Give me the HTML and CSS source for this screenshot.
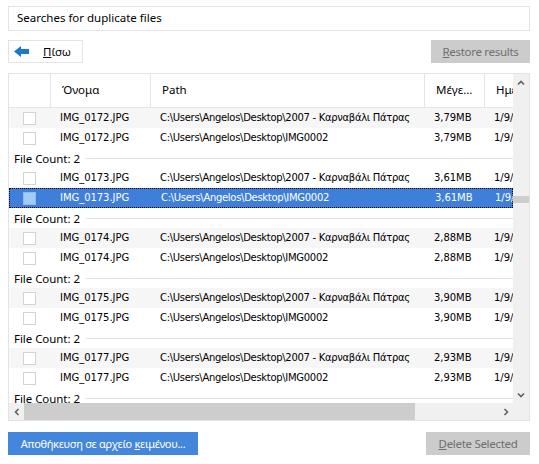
FILE: index.html
```html
<!DOCTYPE html>
<html>
<head>
<meta charset="utf-8">
<link rel="stylesheet" href="styles.css">
</head>
<body>
<div class="page">
  <div class="titlebox">Searches for duplicate files</div>

  <div class="toolbar">
    <button class="btn back">
      <svg class="arrow" width="15" height="11" viewBox="0 0 15 11"><path d="M0 5.5 L7 0 L7 3 L15 3 L15 8 L7 8 L7 11 Z" fill="#1a78cf"/></svg>
      <span><u>Π</u>ίσω</span>
    </button>
    <button class="btn gray restore"><u>R</u>estore results</button>
  </div>

  <div class="table">
    <div class="main">
      <div class="header">
        <div class="hcell c1"></div>
        <div class="hcell c2">Όνομα</div>
        <div class="hcell c3">Path</div>
        <div class="hcell c4">Μέγε...</div>
        <div class="hcell c5">Ημε</div>
      </div>
      <div class="body">
        <div class="row alt"><div class="cb"><span class="box"></span></div><div>IMG_0172.JPG</div><div class="p">C:\Users\Angelos\Desktop\2007 - Καρναβάλι Πάτρας</div><div>3,79MB</div><div>1/9/</div></div>
        <div class="row"><div class="cb"><span class="box"></span></div><div>IMG_0172.JPG</div><div class="p">C:\Users\Angelos\Desktop\IMG0002</div><div>3,79MB</div><div>1/9/</div></div>
        <div class="group"><span>File Count: 2</span><i></i></div>
        <div class="row"><div class="cb"><span class="box"></span></div><div>IMG_0173.JPG</div><div class="p">C:\Users\Angelos\Desktop\2007 - Καρναβάλι Πάτρας</div><div>3,61MB</div><div>1/9/</div></div>
        <div class="row sel"><div class="cb"><span class="box"></span></div><div>IMG_0173.JPG</div><div class="p">C:\Users\Angelos\Desktop\IMG0002</div><div>3,61MB</div><div>1/9/</div></div>
        <div class="group"><span>File Count: 2</span><i></i></div>
        <div class="row alt"><div class="cb"><span class="box"></span></div><div>IMG_0174.JPG</div><div class="p">C:\Users\Angelos\Desktop\2007 - Καρναβάλι Πάτρας</div><div>2,88MB</div><div>1/9/</div></div>
        <div class="row"><div class="cb"><span class="box"></span></div><div>IMG_0174.JPG</div><div class="p">C:\Users\Angelos\Desktop\IMG0002</div><div>2,88MB</div><div>1/9/</div></div>
        <div class="group"><span>File Count: 2</span><i></i></div>
        <div class="row alt"><div class="cb"><span class="box"></span></div><div>IMG_0175.JPG</div><div class="p">C:\Users\Angelos\Desktop\2007 - Καρναβάλι Πάτρας</div><div>3,90MB</div><div>1/9/</div></div>
        <div class="row"><div class="cb"><span class="box"></span></div><div>IMG_0175.JPG</div><div class="p">C:\Users\Angelos\Desktop\IMG0002</div><div>3,90MB</div><div>1/9/</div></div>
        <div class="group"><span>File Count: 2</span><i></i></div>
        <div class="row alt"><div class="cb"><span class="box"></span></div><div>IMG_0177.JPG</div><div class="p">C:\Users\Angelos\Desktop\2007 - Καρναβάλι Πάτρας</div><div>2,93MB</div><div>1/9/</div></div>
        <div class="row"><div class="cb"><span class="box"></span></div><div>IMG_0177.JPG</div><div class="p">C:\Users\Angelos\Desktop\IMG0002</div><div>2,93MB</div><div>1/9/</div></div>
        <div class="group"><span>File Count: 2</span><i></i></div>
      </div>
      <div class="hscroll">
        <div class="sarrow"><svg width="8" height="8" viewBox="0 0 8 8"><path d="M5.5 1 L2.5 4 L5.5 7" stroke="#606060" stroke-width="1.6" fill="none"/></svg></div>
        <div class="hthumb"></div>
        <div class="hspace"></div>
        <div class="sarrow"><svg width="8" height="8" viewBox="0 0 8 8"><path d="M2.5 1 L5.5 4 L2.5 7" stroke="#606060" stroke-width="1.6" fill="none"/></svg></div>
      </div>
    </div>
    <div class="vscroll">
      <div class="varrow"><svg width="8" height="8" viewBox="0 0 8 8"><path d="M1 5.5 L4 2.5 L7 5.5" stroke="#606060" stroke-width="1.6" fill="none"/></svg></div>
      <div class="vtrack"><div class="vthumb"></div></div>
      <div class="varrow"><svg width="8" height="8" viewBox="0 0 8 8"><path d="M1 2.5 L4 5.5 L7 2.5" stroke="#606060" stroke-width="1.6" fill="none"/></svg></div>
      <div class="corner"></div>
    </div>
  </div>

  <div class="footer">
    <button class="btn blue save">Αποθήκευση σε αρχείο <u>κ</u>ειμένου...</button>
    <button class="btn gray del"><u>D</u>elete Selected</button>
  </div>
</div>
</body>
</html>
```

FILE: styles.css
```css
html, body {
  margin: 0;
  padding: 0;
  background: #ffffff;
}
.page {
  width: 539px;
  height: 464px;
  padding: 6px 9px 0 8px;
  box-sizing: border-box;
  font-family: "Noto Sans", "Open Sans", sans-serif;
  font-size: 11.5px;
  color: #000;
}
.titlebox {
  height: 25px;
  box-sizing: border-box;
  border: 1px solid #e3e3e3;
  padding-left: 8px;
  line-height: 22px;
  font-size: 11.5px;
}
.toolbar {
  margin-top: 9px;
  display: flex;
  justify-content: space-between;
  height: 23px;
}
.btn {
  font-family: "Noto Sans", "Open Sans", sans-serif;
  font-size: 11.5px;
  letter-spacing: -0.3px;
  height: 23px;
  box-sizing: border-box;
  border: 1px solid transparent;
  padding: 0;
  margin: 0;
  line-height: 20px;
  white-space: nowrap;
  cursor: default;
}
.back {
  width: 75px;
  background: #fff;
  border-color: #e3e3e3;
  display: flex;
  align-items: center;
  padding-left: 5px;
  gap: 14px;
  color: #000;
  letter-spacing: 0;
}
.arrow { display: block; }
.gray {
  background: #cccccc;
  color: #6f6f6f;
}
.restore { width: 99px; }
.table {
  margin-top: 10px;
  height: 348px;
  box-sizing: border-box;
  border: 1px solid #e3e3e3;
  display: flex;
}
.main {
  width: 504px;
  display: flex;
  flex-direction: column;
}
.header {
  display: grid;
  grid-template-columns: 42px 100px 274px 60px 28px;
  height: 34px;
  box-sizing: border-box;
  border-bottom: 1px solid #e5e5e5;
}
.hcell {
  border-right: 1px solid #e5e5e5;
  padding-left: 11px;
  line-height: 32px;
  white-space: nowrap;
  overflow: hidden;
  font-size: 11.5px;
}
.hcell.c5 { border-right: none; }
.body {
  height: 295px;
  overflow: hidden;
  font-family: "DejaVu Sans", sans-serif;
  font-size: 10px;
  letter-spacing: -0.05px;
}
.row {
  display: grid;
  grid-template-columns: 42px 100px 274px 60px 28px;
  height: 20px;
  line-height: 20px;
  box-sizing: border-box;
  white-space: nowrap;
}
.row > div {
  padding-left: 9px;
  overflow: hidden;
}
.row > div.p { letter-spacing: -0.3px; }
.row > div.cb {
  padding-left: 14px;
  display: flex;
  align-items: center;
}
.row.alt { background: #f6f6f6; }
.box {
  width: 13px;
  height: 13px;
  box-sizing: border-box;
  border: 1px solid #d3d3d3;
  background: #fff;
}
.row.sel {
  background: #3f7fd9;
  color: #fff;
  border: 1px dotted #000;
  line-height: 18px;
}
.row.sel > div.cb { padding-left: 13px; }
.row.sel > div:nth-child(2) { padding-left: 8px; }
.row.sel .box {
  background: #a3cbf5;
  border-color: #8fbbec;
}
.group {
  height: 20px;
  display: flex;
  align-items: center;
  padding-left: 5px;
  font-family: "Noto Sans", "Open Sans", sans-serif;
  font-size: 11.5px;
  white-space: nowrap;
}
.group i {
  flex: 1;
  height: 1px;
  background: #e2e2e2;
  margin-left: 6px;
  margin-top: 1px;
}
.hscroll {
  height: 17px;
  background: #f0f0f0;
  display: flex;
}
.sarrow {
  width: 15px;
  display: flex;
  align-items: center;
  justify-content: center;
}
.hthumb {
  width: 391px;
  background: #cdcdcd;
}
.hspace { flex: 1; }
.vscroll {
  width: 17px;
  background: #f0f0f0;
  display: flex;
  flex-direction: column;
}
.varrow {
  height: 17px;
  display: flex;
  align-items: center;
  justify-content: center;
}
.vtrack {
  flex: 1;
  padding-top: 105px;
}
.vthumb {
  height: 7px;
  background: #cdcdcd;
}
.corner { height: 17px; }
.footer {
  margin-top: 11px;
  display: flex;
  justify-content: space-between;
}
.blue {
  background: #4486dc;
  color: #fff;
}
.save {
  width: 190px;
  font-size: 11px;
  letter-spacing: -0.3px;
}
.del { width: 104px; }
u { text-decoration: underline; }
```
